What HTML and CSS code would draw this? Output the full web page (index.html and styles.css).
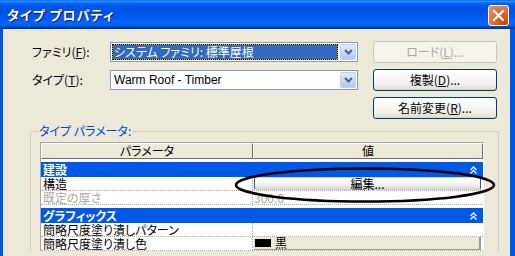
FILE: index.html
```html
<!DOCTYPE html>
<html lang="ja">
<head>
    <meta charset="UTF-8">
    <title>タイプ プロパティ</title>
    <link rel="stylesheet" href="styles.css">
</head>
<body>
    <div class="window">
        <div class="titlebar">
            <span class="title">タイプ プロパティ</span>
            <span class="close">
                <svg width="21" height="21" viewBox="0 0 21 21">
                    <path d="M6 6 L15 15 M15 6 L6 15" stroke="#fff" stroke-width="2.2" stroke-linecap="square"/>
                </svg>
            </span>
        </div>
        <div class="client">
            <div class="top-grid">
                <span class="lbl">ファミリ(<u>F</u>):</span>
                <div class="combo">
                    <span class="combo-text selected">システム ファミリ: 標準屋根</span>
                    <span class="drop"><svg width="9" height="6" viewBox="0 0 9 6"><path d="M1 1 L4.5 4.5 L8 1" fill="none" stroke="#4d6185" stroke-width="2"/></svg></span>
                </div>
                <button class="btn" disabled>ロード(<u>L</u>)...</button>

                <span class="lbl">タイプ(<u>T</u>):</span>
                <div class="combo">
                    <span class="combo-text latin">Warm Roof - Timber</span>
                    <span class="drop"><svg width="9" height="6" viewBox="0 0 9 6"><path d="M1 1 L4.5 4.5 L8 1" fill="none" stroke="#4d6185" stroke-width="2"/></svg></span>
                </div>
                <button class="btn">複製(<u>D</u>)...</button>

                <button class="btn rename">名前変更(<u>R</u>)...</button>
            </div>

            <fieldset class="group">
                <legend>タイプ パラメータ:</legend>
                <div class="props">
                    <div class="row head">
                        <div class="hcell name">パラメータ</div>
                        <div class="hcell value">値</div>
                    </div>
                    <div class="row cat">
                        <span>建設</span>
                        <svg width="7" height="8" viewBox="0 0 7 8"><path d="M0.5 4 L3.5 1 L6.5 4 M0.5 7.5 L3.5 4.5 L6.5 7.5" fill="none" stroke="#fff" stroke-width="1.3"/></svg>
                    </div>
                    <div class="row">
                        <div class="cell name">構造</div>
                        <div class="cell value"><span class="cell-btn">編集...</span></div>
                    </div>
                    <div class="row dim">
                        <div class="cell name">既定の厚さ</div>
                        <div class="cell value">300.0</div>
                    </div>
                    <div class="row cat">
                        <span>グラフィックス</span>
                        <svg width="7" height="8" viewBox="0 0 7 8"><path d="M0.5 4 L3.5 1 L6.5 4 M0.5 7.5 L3.5 4.5 L6.5 7.5" fill="none" stroke="#fff" stroke-width="1.3"/></svg>
                    </div>
                    <div class="row">
                        <div class="cell name">簡略尺度塗り潰しパターン</div>
                        <div class="cell value"></div>
                    </div>
                    <div class="row">
                        <div class="cell name">簡略尺度塗り潰し色</div>
                        <div class="cell value"><span class="color-btn"><span class="swatch"></span>黒</span></div>
                    </div>
                </div>
            </fieldset>
        </div>

        <!-- hand-drawn highlight around the edit button -->
        <svg class="mark" width="266" height="40" viewBox="0 0 266 40">
            <ellipse cx="131" cy="19" rx="129" ry="16.5" fill="none" stroke="#000" stroke-width="2.6"/>
        </svg>
    </div>
</body>
</html>
```

FILE: styles.css
```css
body {
    margin: 0;
    font-family: "Noto Sans CJK JP", sans-serif;
    font-feature-settings: "palt";
    font-size: 12px;
    color: #000;
}
.window {
    position: relative;
    width: 515px;
    height: 256px;
    overflow: hidden;
    display: flex;
    flex-direction: column;
    background: #ece9d8;
}
.titlebar {
    height: 29px;
    flex: none;
    display: flex;
    align-items: center;
    justify-content: space-between;
    padding: 0 6px 0 7px;
    background: linear-gradient(to bottom, #0058ee 0%, #3593ff 4%, #288eff 6%, #127dff 8%, #036ffc 10%, #0262ee 14%, #0057e5 20%, #0054e3 24%, #0055eb 56%, #005bf5 66%, #026afe 76%, #0062ef 86%, #0052d6 92%, #0040ab 94%, #003092 100%);
}
.title {
    color: #fff;
    font-weight: bold;
    font-size: 13px;
    letter-spacing: 1px;
    line-height: 16px;
    text-shadow: 1px 1px #0f1089;
    margin-top: 1px;
}
.close {
    width: 21px;
    height: 21px;
    box-sizing: border-box;
    border: 1px solid #fff;
    border-radius: 3px;
    background: radial-gradient(circle at 80% 85%, #cc4600 0%, #dc6527 40%, #e58d6b 90%);
    display: flex;
    align-items: center;
    justify-content: center;
    margin-top: 2px;
}
.close svg {
    margin: -1px;
}
.client {
    flex: 1;
    border-left: 3px solid #0055e5;
    border-right: 5px solid #0055e5;
    padding-top: 12px;
}
.top-grid {
    display: grid;
    grid-template-columns: 78px 263px 124px;
    grid-auto-rows: 22px;
    row-gap: 6px;
    margin-left: 29px;
}
.lbl {
    line-height: 14px;
    align-self: center;
}
.combo {
    width: 248px;
    height: 20px;
    box-sizing: border-box;
    border: 1px solid #7f9db9;
    background: #fff;
    display: flex;
    align-items: center;
    padding: 0 1px;
    align-self: center;
}
.combo-text {
    flex: 1;
    height: 16px;
    line-height: 14px;
    padding-left: 1px;
    box-sizing: border-box;
    border: 1px solid transparent;
    white-space: nowrap;
}
.combo-text.selected {
    color: #fff;
    border: 1px dotted #000;
    background: linear-gradient(#316ac5, #316ac5) padding-box, #f0b000 border-box;
    margin-right: 2px;
}
.combo-text.latin {
    font-family: "Liberation Sans", Arial, sans-serif;
    font-size: 12px;
    color: #000;
}
.drop {
    width: 16px;
    height: 16px;
    box-sizing: border-box;
    border: 1px solid #bccdf6;
    border-radius: 2px;
    background: linear-gradient(#e3ebfe, #c4d5fc 60%, #b3c8f6);
    display: flex;
    align-items: center;
    justify-content: center;
}
.btn {
    font: inherit;
    font-feature-settings: "palt";
    height: 22px;
    padding: 0;
    border: 1px solid #003c74;
    border-radius: 3px;
    background: linear-gradient(#ffffff, #f2f1ec 70%, #e0ddd2 95%, #d6d0c5);
    color: #000;
    line-height: 14px;
}
.btn:disabled {
    border-color: #c9c7ba;
    background: #f5f4ea;
    color: #aca899;
}
.rename {
    grid-column: 3;
}
.group {
    margin: 5px 0 0 27px;
    width: 469px;
    box-sizing: border-box;
    padding: 4px 0 0 9px;
    border: 1px solid #d0d0bf;
    border-bottom: none;
    border-radius: 3px 3px 0 0;
    min-inline-size: 0;
}
.group legend {
    color: #0046d5;
    padding: 0 1px;
    margin-left: -2px;
    line-height: 14px;
}
.props {
    width: 444px;
    box-sizing: border-box;
    border-top: 1px solid #aca899;
    border-left: 1px solid #aca899;
    border-right: 1px solid #fff;
    background: #fff;
}
.row {
    display: flex;
    height: 14px;
    box-sizing: border-box;
    border-bottom: 1px dotted #aca899;
    line-height: 13px;
}
.cell {
    white-space: nowrap;
}
.cell.name {
    width: 212px;
    box-sizing: border-box;
    padding-left: 2px;
    border-right: 1px dotted #aca899;
}
.cell.value {
    flex: 1;
    display: flex;
    padding: 0 2px 0 1px;
}
.row.head {
    height: 16px;
    border-bottom: none;
}
.hcell {
    box-sizing: border-box;
    background: #ece9d8;
    border-top: 1px solid #fff;
    border-left: 1px solid #fff;
    border-right: 1px solid #716f64;
    border-bottom: 1px solid #716f64;
    text-align: center;
    line-height: 14px;
}
.hcell.name {
    width: 212px;
}
.hcell.value {
    flex: 1;
}
.row.cat {
    height: 15px;
    margin-top: 3px;
    border-bottom: none;
    background: #0058e6;
    color: #fff;
    font-weight: bold;
    padding: 0 6px 0 2px;
    justify-content: space-between;
    align-items: center;
    line-height: 15px;
}
.row.dim {
    color: #aca899;
}
.cell-btn {
    flex: 1;
    box-sizing: border-box;
    border: 1px solid #2d5b8a;
    border-top-color: #c7d3e0;
    border-bottom-color: #c7d3e0;
    border-radius: 2px;
    background: linear-gradient(#ffffff, #f3f2ee 60%, #dcd8cc);
    text-align: center;
    line-height: 11px;
}
.color-btn {
    flex: 1;
    display: flex;
    align-items: center;
    box-sizing: border-box;
    background: #ece9d8;
    border-right: 2px solid #9d9a8c;
    border-bottom: 1px solid #9d9a8c;
    line-height: 12px;
}
.swatch {
    width: 16px;
    height: 8px;
    background: #000;
    margin: 0 4px 0 1px;
}
.mark {
    position: absolute;
    left: 234px;
    top: 166px;
}
```
